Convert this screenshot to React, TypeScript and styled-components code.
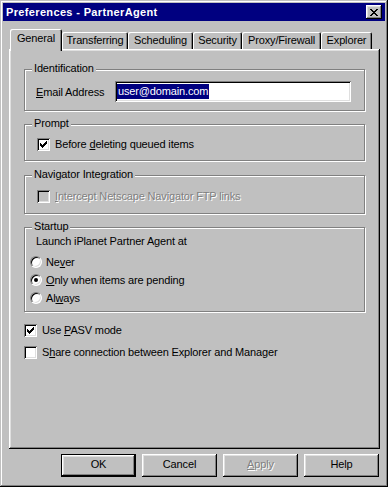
import React from "react";
import styled, { createGlobalStyle, css } from "styled-components";

const GlobalStyle = createGlobalStyle`
  html, body {
    margin: 0;
    padding: 0;
    background: #c0c0c0;
  }
  body {
    font-family: "Liberation Sans", Arial, sans-serif;
    font-size: 11px;
    letter-spacing: -0.15px;
    color: #000;
  }
`;

const raised = css`
  box-shadow: inset -1px -1px #000, inset 1px 1px #fff, inset -2px -2px #808080,
    inset 2px 2px #dfdfdf;
`;

const sunken = css`
  box-shadow: inset 1px 1px #808080, inset -1px -1px #fff, inset 2px 2px #000,
    inset -2px -2px #dfdfdf;
`;

const Window = styled.div`
  box-sizing: border-box;
  width: 388px;
  height: 487px;
  padding: 3px;
  background: #c0c0c0;
  box-shadow: inset -1px -1px #000, inset 1px 1px #c0c0c0, inset -2px -2px #808080,
    inset 2px 2px #fff;
  display: flex;
  flex-direction: column;
`;

const TitleBar = styled.div`
  height: 18px;
  background: #000080;
  color: #fff;
  font-weight: bold;
  letter-spacing: 0.35px;
  display: flex;
  align-items: center;
  justify-content: space-between;
  padding: 0 3px 0 3px;
`;

const CloseButton = styled.div`
  width: 16px;
  height: 14px;
  background: #c0c0c0;
  ${raised};
  display: flex;
  align-items: center;
  justify-content: center;
`;

const TabStrip = styled.div`
  display: flex;
  align-items: flex-end;
  height: 20px;
  margin-top: 8px;
  padding-left: 7px;
  position: relative;
  z-index: 1;
`;

const Tab = styled.div<{ $active?: boolean; $width: number }>`
  box-sizing: border-box;
  width: ${(p) => p.$width}px;
  height: ${(p) => (p.$active ? 22 : 17)}px;
  margin-bottom: ${(p) => (p.$active ? -2 : 0)}px;
  padding-top: ${(p) => (p.$active ? 3 : 2)}px;
  line-height: 13px;
  text-align: center;
  background: #c0c0c0;
  border-radius: 2px 2px 0 0;
  box-shadow: inset 1px 1px #fff, inset -1px 0 #000, inset -2px 0 #808080;
`;

const Panel = styled.div`
  box-sizing: border-box;
  width: 371px;
  height: 400px;
  margin-left: 6px;
  padding: 20px 15px 0;
  ${raised};
  display: flex;
  flex-direction: column;
`;

const Group = styled.div<{ $pad: string; $gap?: number }>`
  position: relative;
  border: 1px solid #808080;
  box-shadow: inset 1px 1px #fff, 1px 1px #fff;
  padding: ${(p) => p.$pad};
  margin-top: ${(p) => p.$gap ?? 0}px;
`;

const Caption = styled.span`
  position: absolute;
  top: -8px;
  left: 7px;
  padding: 0 2px;
  line-height: 13px;
  background: #c0c0c0;
`;

const FieldRow = styled.div`
  display: flex;
  align-items: center;
`;

const FieldLabel = styled.span`
  width: 79px;
  flex: none;
`;

const TextBox = styled.div`
  box-sizing: border-box;
  flex: 1;
  height: 21px;
  padding: 3px 2px 0;
  background: #fff;
  ${sunken};
`;

const Selection = styled.span`
  display: inline-block;
  line-height: 15px;
  padding: 0 1px;
  background: #000080;
  color: #fff;
`;

const OptionRow = styled.label<{ $height: number; $indent?: number; $gap?: number }>`
  display: flex;
  align-items: center;
  height: ${(p) => p.$height}px;
  padding-left: ${(p) => p.$indent ?? 0}px;
  margin-top: ${(p) => p.$gap ?? 0}px;
`;

const Box = styled.span<{ $disabled?: boolean }>`
  box-sizing: border-box;
  width: 13px;
  height: 13px;
  flex: none;
  margin-right: 5px;
  background: ${(p) => (p.$disabled ? "#c0c0c0" : "#fff")};
  ${sunken};
  display: flex;
  align-items: center;
  justify-content: center;
`;

const Radio = styled.span`
  box-sizing: border-box;
  width: 12px;
  height: 12px;
  flex: none;
  margin-right: 4px;
  border-radius: 50%;
  background: #fff;
  border: 1px solid;
  border-color: #808080 #fff #fff #808080;
  box-shadow: inset 1px 1px #000, inset -1px -1px #dfdfdf;
  display: flex;
  align-items: center;
  justify-content: center;
`;

const Dot = styled.span`
  width: 4px;
  height: 4px;
  border-radius: 50%;
  background: #000;
`;

const OptionText = styled.span<{ $disabled?: boolean }>`
  line-height: 13px;
  ${(p) =>
    p.$disabled &&
    css`
      color: #808080;
      text-shadow: 1px 1px #fff;
    `}
`;

const Line = styled.div`
  height: 18px;
  line-height: 18px;
  padding-left: 11px;
`;

const AccessKey = styled.span`
  text-decoration: underline;
  text-underline-offset: 1px;
`;

const ButtonBar = styled.div`
  display: flex;
  justify-content: flex-end;
  gap: 6px;
  margin-top: 5px;
  padding-right: 6px;
`;

const Button = styled.div<{ $default?: boolean; $disabled?: boolean }>`
  box-sizing: border-box;
  width: 75px;
  height: 23px;
  line-height: 21px;
  text-align: center;
  background: #c0c0c0;
  ${(p) =>
    p.$default
      ? css`
          border: 1px solid #000;
          line-height: 19px;
        `
      : ""}
  ${raised};
  ${(p) =>
    p.$disabled &&
    css`
      color: #808080;
      text-shadow: 1px 1px #fff;
    `}
`;

const pixels = (rows: string[], fill: string) =>
  rows.flatMap((row, y) =>
    row.split("").map((c, x) =>
      c === "#" ? <rect key={`${x}-${y}`} x={x} y={y} width={1} height={1} fill={fill} /> : null
    )
  );

const CloseGlyph = () => (
  <svg width="8" height="7" viewBox="0 0 8 7" shapeRendering="crispEdges">
    {pixels(
      ["##....##", ".##..##.", "..####..", "...##...", "..####..", ".##..##.", "##....##"],
      "#000"
    )}
  </svg>
);

const CheckGlyph = () => (
  <svg width="7" height="7" viewBox="0 0 7 7" shapeRendering="crispEdges">
    {pixels(
      ["......#", ".....##", "#...###", "##.###.", "#####..", ".###...", "..#...."],
      "#000"
    )}
  </svg>
);

const Label = ({ text, hotkey }: { text: string; hotkey?: number }) => {
  if (hotkey === undefined) return <>{text}</>;
  return (
    <>
      {text.slice(0, hotkey)}
      <AccessKey>{text[hotkey]}</AccessKey>
      {text.slice(hotkey + 1)}
    </>
  );
};

const tabs = [
  { name: "General", width: 52 },
  { name: "Transferring", width: 66 },
  { name: "Scheduling", width: 65 },
  { name: "Security", width: 49 },
  { name: "Proxy/Firewall", width: 79 },
  { name: "Explorer", width: 51 },
];

const launchOptions = [
  { text: "Never", hotkey: 2, checked: false },
  { text: "Only when items are pending", hotkey: 0, checked: true },
  { text: "Always", hotkey: 2, checked: false },
];

const buttons = [
  { text: "OK", isDefault: true },
  { text: "Cancel" },
  { text: "Apply", hotkey: 0, disabled: true },
  { text: "Help" },
];

const Checkbox = ({
  text,
  hotkey,
  checked,
  disabled,
  indent,
  gap,
}: {
  text: string;
  hotkey?: number;
  checked?: boolean;
  disabled?: boolean;
  indent?: number;
  gap?: number;
}) => (
  <OptionRow $height={17} $indent={indent} $gap={gap}>
    <Box $disabled={disabled}>{checked && <CheckGlyph />}</Box>
    <OptionText $disabled={disabled}>
      <Label text={text} hotkey={hotkey} />
    </OptionText>
  </OptionRow>
);

export default function App() {
  return (
    <>
      <GlobalStyle />
      <Window>
        <TitleBar>
          <span>Preferences - PartnerAgent</span>
          <CloseButton>
            <CloseGlyph />
          </CloseButton>
        </TitleBar>

        <TabStrip>
          {tabs.map((tab, i) => (
            <Tab key={tab.name} $width={tab.width} $active={i === 0}>
              {tab.name}
            </Tab>
          ))}
        </TabStrip>

        <Panel>
          <Group $pad="11px 13px 8px 11px">
            <Caption>Identification</Caption>
            <FieldRow>
              <FieldLabel>
                <Label text="Email Address" hotkey={0} />
              </FieldLabel>
              <TextBox>
                <Selection>user@domain.com</Selection>
              </TextBox>
            </FieldRow>
          </Group>

          <Group $pad="11px 12px 7px 12px" $gap={13}>
            <Caption>Prompt</Caption>
            <Checkbox text="Before deleting queued items" hotkey={7} checked />
          </Group>

          <Group $pad="12px 12px 8px 12px" $gap={14}>
            <Caption>Navigator Integration</Caption>
            <Checkbox text="Intercept Netscape Navigator FTP links" hotkey={0} disabled />
          </Group>

          <Group $pad="4px 0 4px 0" $gap={13}>
            <Caption>Startup</Caption>
            <Line>Launch iPlanet Partner Agent at</Line>
            {launchOptions.map((opt, i) => (
              <OptionRow key={opt.text} $height={18} $indent={5} $gap={i === 0 ? 3 : 0}>
                <Radio>{opt.checked && <Dot />}</Radio>
                <OptionText>
                  <Label text={opt.text} hotkey={opt.hotkey} />
                </OptionText>
              </OptionRow>
            ))}
          </Group>

          <Checkbox text="Use PASV mode" hotkey={4} checked gap={10} />
          <Checkbox text="Share connection between Explorer and Manager" hotkey={1} gap={5} />
        </Panel>

        <ButtonBar>
          {buttons.map((b) => (
            <Button key={b.text} $default={b.isDefault} $disabled={b.disabled}>
              <Label text={b.text} hotkey={b.hotkey} />
            </Button>
          ))}
        </ButtonBar>
      </Window>
    </>
  );
}
